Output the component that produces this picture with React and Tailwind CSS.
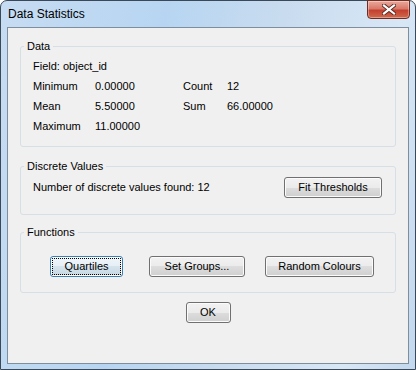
import React from "react";

const faceGray =
  "border-[#707070] bg-[linear-gradient(to_bottom,#f2f2f2_0%,#ebebeb_50%,#dddddd_50%,#cfcfcf_100%)]";
const faceFocus =
  "border-[#3c7fb1] bg-[linear-gradient(to_bottom,#f0f6fa_0%,#e6eff5_50%,#d5e3ec_50%,#c6d7e2_100%)] outline-1 outline-dotted outline-black outline-offset-[-3px]";

const Btn = ({ children, className = "", focused = false }) => (
  <button
    className={`h-[21px] rounded-[3px] border text-[11px] leading-none text-black shadow-[inset_0_0_0_1px_#fbfbfb] ${
      focused ? faceFocus : faceGray
    } ${className}`}
  >
    {children}
  </button>
);

const Group = ({ title, children }) => (
  <fieldset className="mx-[12px] rounded-[3px] border border-[#d5dfe5] px-[3px]">
    <legend className="px-[3px] leading-[14px] text-black">{title}</legend>
    {children}
  </fieldset>
);

const CloseIcon = () => (
  <svg width="14" height="11" viewBox="0 0 14 11">
    <path
      d="M2 1.5 L12 9.5 M12 1.5 L2 9.5"
      stroke="#5a2a22"
      strokeWidth="4"
      strokeLinecap="square"
    />
    <path
      d="M2 1.5 L12 9.5 M12 1.5 L2 9.5"
      stroke="#ffffff"
      strokeWidth="2.2"
      strokeLinecap="square"
    />
  </svg>
);

const App = () => {
  return (
    <div className="w-[416px] h-[370px] flex flex-col rounded-t-[7px] border border-[#3a4858] bg-[linear-gradient(100deg,#c6dcf2_0%,#b7d5f2_35%,#c9dcef_60%,#d8e7f6_85%,#c3d8ee_100%)] font-['Liberation_Sans',Arial,sans-serif] text-[11px] text-black">
      {/* title bar */}
      <div className="h-[26px] flex items-start justify-between">
        <div className="pl-[7px] pt-[6px] text-[12px] leading-[15px] text-black">
          Data Statistics
        </div>
        <div className="mr-[5px] mt-[-1px] w-[43px] h-[19px] flex items-center justify-center rounded-b-[4px] border border-[#6e2c22] bg-[linear-gradient(to_bottom,#e9a99a_0%,#d9796a_45%,#c4402f_55%,#cf6a4c_100%)] shadow-[inset_0_0_0_1px_rgba(255,255,255,0.35)]">
          <CloseIcon />
        </div>
      </div>

      {/* client area */}
      <div className="mx-[6px] w-[402px] h-[337px] border border-[#7f8e9d] bg-[#f0f0f0]">
        <div className="pt-[11px]">
          <Group title="Data">
            <div className="pl-[9px] pt-[3px] pb-[10px] grid grid-cols-[62px_88px_44px_auto] auto-rows-[20px] items-center">
              <div className="col-span-4">Field: object_id</div>
              <div>Minimum</div>
              <div>0.00000</div>
              <div>Count</div>
              <div>12</div>
              <div>Mean</div>
              <div>5.50000</div>
              <div>Sum</div>
              <div>66.00000</div>
              <div>Maximum</div>
              <div className="col-span-3">11.00000</div>
            </div>
          </Group>
        </div>

        <div className="pt-[12px]">
          <Group title="Discrete Values">
            <div className="pl-[9px] pr-[10px] pt-[4px] pb-[16px] flex items-center justify-between">
              <span>Number of discrete values found: 12</span>
              <Btn className="w-[98px]">Fit Thresholds</Btn>
            </div>
          </Group>
        </div>

        <div className="pt-[10px]">
          <Group title="Functions">
            <div className="pt-[17px] pb-[15px] flex items-center">
              <Btn focused className="ml-[26px] w-[73px]">
                Quartiles
              </Btn>
              <Btn className="ml-[26px] w-[96px]">Set Groups...</Btn>
              <Btn className="ml-[20px] w-[109px]">Random Colours</Btn>
            </div>
          </Group>
        </div>

        <div className="pt-[9px] flex justify-center">
          <Btn className="w-[45px]">OK</Btn>
        </div>
      </div>
    </div>
  );
};

export default App;
